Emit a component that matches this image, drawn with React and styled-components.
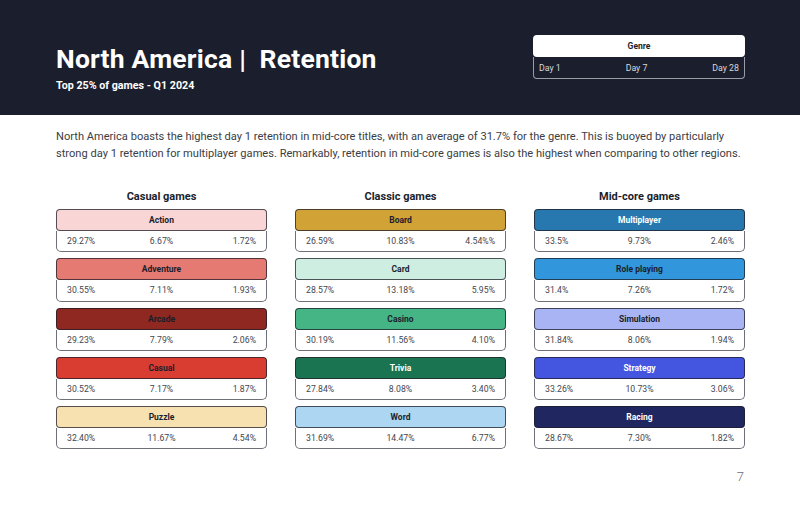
import React from "react";
import styled, { createGlobalStyle } from "styled-components";

const Global = createGlobalStyle`
  html, body { margin: 0; padding: 0; background: #ffffff; }
  body { font-family: Roboto, "Noto Sans", sans-serif; width: 800px; height: 506px; overflow: hidden; }
  * { box-sizing: border-box; }
`;

const Page = styled.div`
  width: 800px;
  height: 506px;
  display: flex;
  flex-direction: column;
  background: #fff;
`;

const Header = styled.header`
  height: 115px;
  background: #1b1e2c;
  display: flex;
  justify-content: space-between;
  align-items: flex-start;
  padding: 35px 55px 0 56px;
`;

const TitleBlock = styled.div`
  display: flex;
  flex-direction: column;
  padding-top: 8px;
`;

const Title = styled.h1`
  margin: 0;
  color: #fff;
  font-size: 26.5px;
  font-weight: 700;
  line-height: 32px;
  letter-spacing: 0.2px;
  white-space: pre;
`;

const Subtitle = styled.div`
  margin-top: 4px;
  color: #fff;
  font-size: 10.7px;
  font-weight: 700;
  line-height: 14px;
`;

const Legend = styled.div`
  width: 212px;
  display: flex;
  flex-direction: column;
`;

const LegendHead = styled.div`
  height: 22px;
  background: #fff;
  border-radius: 4px;
  display: flex;
  align-items: center;
  justify-content: center;
  font-size: 8.5px;
  font-weight: 700;
  color: #1b1e2c;
`;

const LegendRow = styled.div`
  height: 22px;
  border: 1px solid #9a9ca6;
  border-top: none;
  border-radius: 0 0 4px 4px;
  display: flex;
  align-items: center;
  justify-content: space-between;
  padding: 0 5px;
  font-size: 8.8px;
  color: #d6d7dc;
`;

const Body = styled.main`
  flex: 1;
  display: flex;
  flex-direction: column;
  padding: 13px 55px 0 56px;
  position: relative;
`;

const Paragraph = styled.p`
  margin: 0;
  font-size: 11.1px;
  line-height: 17px;
  color: #3b3d45;
  white-space: nowrap;
`;

const Columns = styled.div`
  margin-top: 28px;
  display: grid;
  grid-template-columns: repeat(3, 211px);
  column-gap: 28px;
`;

const Column = styled.section`
  display: flex;
  flex-direction: column;
  gap: 6px;
`;

const ColumnTitle = styled.h2`
  margin: 0 0 -1px;
  text-align: center;
  font-size: 11px;
  font-weight: 700;
  color: #1b1e2c;
  line-height: 14px;
`;

const Card = styled.div`
  display: flex;
  flex-direction: column;
`;

const CardHead = styled.div`
  height: 22px;
  border-radius: 4px;
  border: 1px solid rgba(30, 30, 40, 0.75);
  background: ${(p) => p.$bg};
  color: ${(p) => (p.$light ? "#ffffff" : "#1b1e2c")};
  display: flex;
  align-items: center;
  justify-content: center;
  font-size: 8.5px;
  font-weight: 700;
`;

const CardRow = styled.div`
  height: 21.3px;
  border: 1px solid #6e7079;
  border-top: none;
  border-radius: 0 0 5px 5px;
  display: flex;
  align-items: center;
  justify-content: space-between;
  padding: 0 10px 0 10px;
  font-size: 8.7px;
  color: #44464e;
`;

const Val = styled.span`
  flex: 1;
  text-align: ${(p) => p.$align};
`;

const PageNum = styled.div`
  position: absolute;
  right: 56px;
  bottom: 22px;
  font-size: 13px;
  font-weight: 300;
  color: #6b6d75;
`;

const data = [
  {
    title: "Casual games",
    items: [
      ["Action", "#f9d6d5", false, ["29.27%", "6.67%", "1.72%"]],
      ["Adventure", "#e57a72", false, ["30.55%", "7.11%", "1.93%"]],
      ["Arcade", "#8e2820", false, ["29.23%", "7.79%", "2.06%"]],
      ["Casual", "#d93d31", false, ["30.52%", "7.17%", "1.87%"]],
      ["Puzzle", "#f8e1b0", false, ["32.40%", "11.67%", "4.54%"]],
    ],
  },
  {
    title: "Classic games",
    items: [
      ["Board", "#d1a236", false, ["26.59%", "10.83%", "4.54%%"]],
      ["Card", "#cdeee0", false, ["28.57%", "13.18%", "5.95%"]],
      ["Casino", "#45b585", false, ["30.19%", "11.56%", "4.10%"]],
      ["Trivia", "#1b7451", true, ["27.84%", "8.08%", "3.40%"]],
      ["Word", "#acd6f2", false, ["31.69%", "14.47%", "6.77%"]],
    ],
  },
  {
    title: "Mid-core games",
    items: [
      ["Multiplayer", "#2878b0", true, ["33.5%", "9.73%", "2.46%"]],
      ["Role playing", "#3296dc", false, ["31.4%", "7.26%", "1.72%"]],
      ["Simulation", "#a9b4f4", false, ["31.84%", "8.06%", "1.94%"]],
      ["Strategy", "#4456e0", true, ["33.26%", "10.73%", "3.06%"]],
      ["Racing", "#1f2660", true, ["28.67%", "7.30%", "1.82%"]],
    ],
  },
];

export default function App() {
  return (
    <Page>
      <Global />
      <Header>
        <TitleBlock>
          <Title>{"North America |  Retention"}</Title>
          <Subtitle>Top 25% of games - Q1 2024</Subtitle>
        </TitleBlock>
        <Legend>
          <LegendHead>Genre</LegendHead>
          <LegendRow>
            <span>Day 1</span>
            <span>Day 7</span>
            <span>Day 28</span>
          </LegendRow>
        </Legend>
      </Header>
      <Body>
        <Paragraph>
          North America boasts the highest day 1 retention in mid-core titles, with an average of 31.7% for the genre. This is buoyed by particularly
          <br />
          strong day 1 retention for multiplayer games. Remarkably, retention in mid-core games is also the highest when comparing to other regions.
        </Paragraph>
        <Columns>
          {data.map((col) => (
            <Column key={col.title}>
              <ColumnTitle>{col.title}</ColumnTitle>
              {col.items.map(([name, bg, light, vals]) => (
                <Card key={name}>
                  <CardHead $bg={bg} $light={light}>{name}</CardHead>
                  <CardRow>
                    <Val $align="left">{vals[0]}</Val>
                    <Val $align="center">{vals[1]}</Val>
                    <Val $align="right">{vals[2]}</Val>
                  </CardRow>
                </Card>
              ))}
            </Column>
          ))}
        </Columns>
        <PageNum>7</PageNum>
      </Body>
    </Page>
  );
}
